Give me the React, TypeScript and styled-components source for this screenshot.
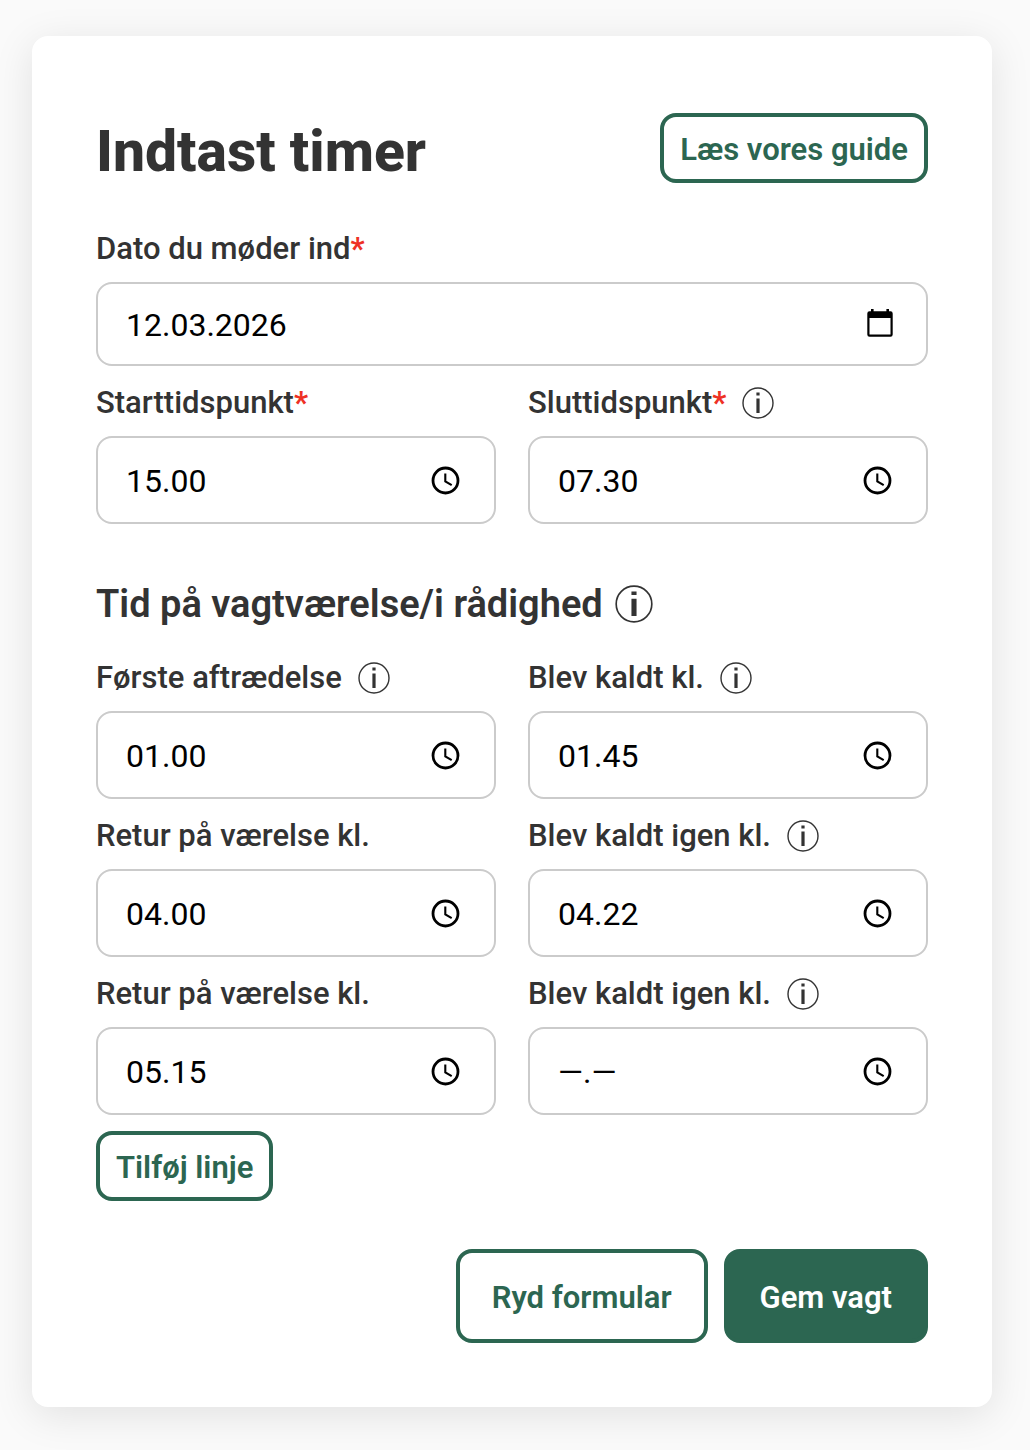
import React, { useId, useState } from "react";
import styled, { createGlobalStyle } from "styled-components";

const green = "#2c6651";
const ink = "#333333";

const GlobalStyle = createGlobalStyle`
  *, *::before, *::after { box-sizing: border-box; }
  body {
    margin: 0;
    background: #fafafa;
    color: ${ink};
    font-family: Roboto, "Liberation Sans", sans-serif;
  }
`;

const Page = styled.main`
  padding: 36px 38px 43px 32px;
`;

const Card = styled.form`
  padding: 64px;
  background: #fff;
  border-radius: 16px;
  box-shadow: 0 8px 40px rgba(0, 0, 0, 0.1);
`;

const Header = styled.header`
  display: flex;
  align-items: center;
  justify-content: space-between;
  gap: 16px;
  min-height: 96px;
  margin-bottom: 32px;
`;

const Title = styled.h1`
  margin: 0;
  padding-top: 8px;
  font-size: 57px;
  line-height: 64px;
  font-weight: 800;
`;

const SectionTitle = styled.h2`
  display: flex;
  align-items: center;
  gap: 12px;
  margin: 56px 0 29px;
  font-size: 38px;
  line-height: 48px;
  font-weight: 600;
`;

const Fields = styled.div`
  display: grid;
  grid-template-columns: repeat(2, minmax(0, 1fr));
  gap: 16px 32px;
`;

const FieldBox = styled.div<{ $wide?: boolean }>`
  display: flex;
  flex-direction: column;
  gap: 12px;
  grid-column: ${(p) => (p.$wide ? "1 / -1" : "auto")};
`;

const LabelRow = styled.div`
  display: flex;
  align-items: center;
  gap: 16px;
  font-size: 31px;
  line-height: 42px;
  font-weight: 500;
`;

const Required = styled.span`
  color: #ee3124;
  font-weight: 700;
`;

const Control = styled.div<{ $height: number }>`
  display: flex;
  align-items: center;
  height: ${(p) => p.$height}px;
  padding: 0 32px 0 28px;
  background: #fff;
  border: 2px solid #cbcbcb;
  border-radius: 16px;

  &:focus-within { border-color: ${green}; }
`;

const TextInput = styled.input`
  flex: 1;
  min-width: 0;
  padding: 2px 0 0;
  border: 0;
  outline: 0;
  background: transparent;
  color: #000;
  font: inherit;
  font-size: 32px;
  line-height: 40px;
`;

const IconButton = styled.button`
  display: flex;
  flex: none;
  padding: 0;
  border: 0;
  background: none;
  color: inherit;
  cursor: pointer;
`;

const PickerButton = styled(IconButton)`
  color: #000;
`;

const Button = styled.button<{ $large?: boolean; $filled?: boolean }>`
  flex: none;
  padding: ${(p) => (p.$large ? "27px 32px 23px" : "15px 16px 11px")};
  border: 4px solid ${green};
  border-radius: 16px;
  background: ${(p) => (p.$filled ? green : "#fff")};
  color: ${(p) => (p.$filled ? "#fff" : green)};
  font: inherit;
  font-size: 31px;
  line-height: 36px;
  font-weight: 600;
  cursor: pointer;
`;

const AddRow = styled.div`
  margin-top: 16px;
`;

const Actions = styled.footer`
  display: flex;
  justify-content: flex-end;
  gap: 16px;
  margin-top: 48px;
`;

function InfoIcon({ size = 32, bold = false }: { size?: number; bold?: boolean }) {
  return (
    <svg width={size} height={size} viewBox="0 0 32 32" fill="none" stroke="currentColor" aria-hidden="true">
      <circle cx="16" cy="16" r="15" strokeWidth="1.4" />
      <path d="M16 5.500v3M16 11.500v14.500" strokeWidth={bold ? 4.3 : 3.2} />
    </svg>
  );
}

function ClockIcon() {
  return (
    <svg width="32" height="32" viewBox="0 0 32 32" fill="none" stroke="currentColor" aria-hidden="true">
      <circle cx="15.5" cy="16.5" r="12.5" strokeWidth="2.8" />
      <path d="M15.3 9.5v7.8l6.4 3.9" strokeWidth="2.1" />
    </svg>
  );
}

function CalendarIcon() {
  return (
    <svg width="32" height="32" viewBox="0 0 32 32" aria-hidden="true">
      <path
        fill="currentColor"
        fillRule="evenodd"
        d="M9 1h2.600v2.200h12.800V1H27v2.200h1.500a2.200 2.200 0 0 1 2.200 2.200v21.200a2.200 2.200 0 0 1-2.200 2.200H7.500a2.200 2.200 0 0 1-2.200-2.200V5.400a2.200 2.200 0 0 1 2.200-2.200H9zM7.500 10v16.500h21V10z"
      />
    </svg>
  );
}

type FieldProps = {
  label: string;
  value: string;
  kind?: "time" | "date";
  required?: boolean;
  info?: boolean;
};

function Field({ label, value, kind = "time", required, info }: FieldProps) {
  const id = useId();
  const [text, setText] = useState(value);
  const isDate = kind === "date";
  return (
    <FieldBox $wide={isDate}>
      <LabelRow>
        <label htmlFor={id}>
          {label}
          {required && <Required>*</Required>}
        </label>
        {info && (
          <IconButton type="button" aria-label="Info">
            <InfoIcon />
          </IconButton>
        )}
      </LabelRow>
      <Control $height={isDate ? 84 : 88}>
        <TextInput
          id={id}
          type="text"
          inputMode="numeric"
          required={required}
          value={text}
          onChange={(e) => setText(e.target.value)}
        />
        <PickerButton type="button" aria-label={isDate ? "Vælg dato" : "Vælg tid"}>
          {isDate ? <CalendarIcon /> : <ClockIcon />}
        </PickerButton>
      </Control>
    </FieldBox>
  );
}

export default function App() {
  return (
    <Page>
      <GlobalStyle />
      <Card onSubmit={(e) => e.preventDefault()}>
        <Header>
          <Title>Indtast timer</Title>
          <Button type="button">Læs vores guide</Button>
        </Header>
        <Fields>
          <Field kind="date" label="Dato du møder ind" value="12.03.2026" required />
          <Field label="Starttidspunkt" value="15.00" required />
          <Field label="Sluttidspunkt" value="07.30" required info />
        </Fields>
        <SectionTitle>
          Tid på vagtværelse/i rådighed
          <IconButton type="button" aria-label="Info">
            <InfoIcon size={38} bold />
          </IconButton>
        </SectionTitle>
        <Fields>
          <Field label="Første aftrædelse" value="01.00" info />
          <Field label="Blev kaldt kl." value="01.45" info />
          <Field label="Retur på værelse kl." value="04.00" />
          <Field label="Blev kaldt igen kl." value="04.22" info />
          <Field label="Retur på værelse kl." value="05.15" />
          <Field label="Blev kaldt igen kl." value="—.—" info />
        </Fields>
        <AddRow>
          <Button type="button">Tilføj linje</Button>
        </AddRow>
        <Actions>
          <Button type="reset" $large>Ryd formular</Button>
          <Button type="submit" $large $filled>Gem vagt</Button>
        </Actions>
      </Card>
    </Page>
  );
}
